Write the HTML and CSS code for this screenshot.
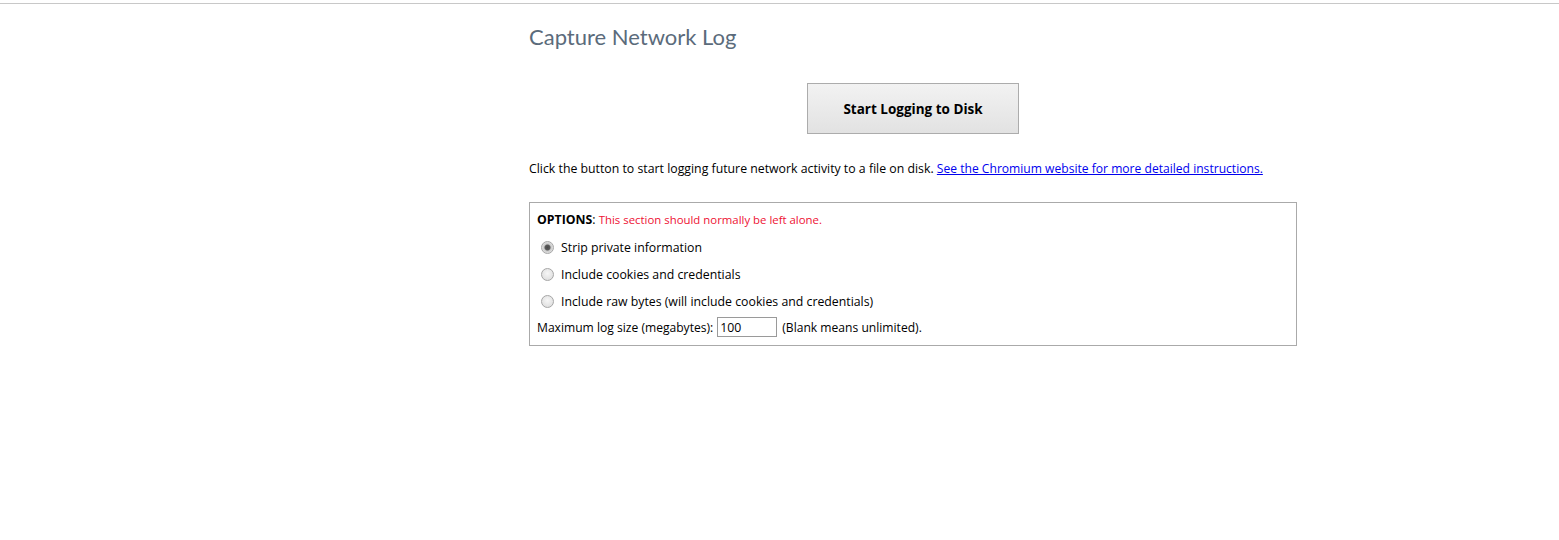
FILE: index.html
```html
<!DOCTYPE html>
<html>
<head>
<meta charset="utf-8">
<link rel="stylesheet" href="styles.css">
</head>
<body>
<div class="topline"></div>
<main class="main">
  <h1 class="title">Capture Network Log</h1>
  <div class="btn-row">
    <button class="start-btn">Start Logging to Disk</button>
  </div>
  <p class="intro">Click the button to start logging future network activity to a file on disk. <a href="#" class="link">See the Chromium website for more detailed instructions.</a></p>
  <div class="options">
    <div class="row head"><b>OPTIONS</b>: <span class="warn">This section should normally be left alone.</span></div>
    <label class="row radio-row"><input type="radio" name="mode" class="radio" checked><span>Strip private information</span></label>
    <label class="row radio-row"><input type="radio" name="mode" class="radio"><span>Include cookies and credentials</span></label>
    <label class="row radio-row"><input type="radio" name="mode" class="radio"><span>Include raw bytes (will include cookies and credentials)</span></label>
    <div class="row size-row"><span class="size-label">Maximum log size (megabytes):</span><input type="text" class="size-input" value="100"><span class="size-label">(Blank means unlimited).</span></div>
  </div>
</main>
</body>
</html>
```

FILE: styles.css
```css
html, body {
  margin: 0;
  padding: 0;
  background: #fff;
}
body {
  font-family: "Open Sans", "Lato", sans-serif;
  font-size: 12.3px;
  color: #000;
}
.topline {
  margin-top: 3px;
  border-top: 1px solid #c8c8c8;
}
.main {
  margin-left: 529px;
  width: 768px;
}
.title {
  margin: 18px 0 0 0;
  font-family: "Lato", "Open Sans", sans-serif;
  font-size: 22px;
  line-height: 30px;
  font-weight: normal;
  color: #5b6b7b;
}
.btn-row {
  display: flex;
  justify-content: center;
  margin-top: 31px;
}
.start-btn {
  width: 212px;
  height: 51px;
  border: 1px solid #acacac;
  background: linear-gradient(#f2f2f2, #e2e2e2);
  font-family: "Open Sans", sans-serif;
  font-size: 13.5px;
  font-weight: bold;
  color: #000;
  padding: 0;
}
.intro {
  margin: 27px 0 0 0;
  line-height: 16px;
}
.link {
  color: #0000ee;
  text-decoration: underline;
  font-size: 12.1px;
}
.options {
  margin-top: 25px;
  height: 144px;
  box-sizing: border-box;
  border: 1px solid #aaa;
  padding: 9px 7px 0 7px;
  display: flex;
  flex-direction: column;
}
.row {
  line-height: 16px;
  display: flex;
  align-items: center;
}
.head {
  display: block;
}
.head b {
  font-weight: bold;
}
.warn {
  color: #ee1133;
  font-size: 11.4px;
}
.radio-row {
  gap: 7px;
  margin-top: 11px;
}
.head + .radio-row {
  margin-top: 12px;
}
.radio {
  appearance: none;
  -webkit-appearance: none;
  margin: 0 0 0 4px;
  width: 13px;
  height: 13px;
  border-radius: 50%;
  border: 1px solid #a6a6a6;
  background: radial-gradient(circle at 50% 40%, #f6f6f6, #d9d9d9);
  position: relative;
  top: -1px;
}
.radio:checked {
  background: radial-gradient(circle, #4a4a4a 0, #5a5a5a 2.5px, #c8c8c8 3.5px, #e6e6e6 6px);
}
.size-row {
  gap: 4px;
  margin-top: 7px;
}
.size-label {
  font-size: 12.1px;
  position: relative;
  top: 1px;
}
.size-input {
  width: 60px;
  height: 20px;
  box-sizing: border-box;
  border: 1px solid #9a9a9a;
  font-family: inherit;
  font-size: 12.3px;
  padding: 0 2px;
  margin: 0 1px 0 0;
}
```
